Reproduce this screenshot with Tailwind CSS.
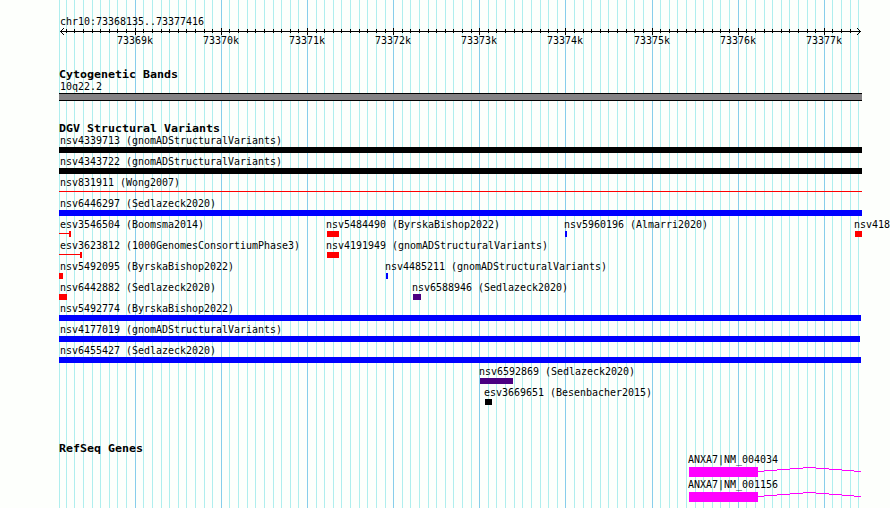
<!DOCTYPE html>
<html lang="en">
<head>
<meta charset="utf-8">
<title>chr10:73368135..73377416</title>
<script src="https://cdn.jsdelivr.net/npm/@tailwindcss/browser@4"></script>
</head>
<body class="bg-[#fdfffc] overflow-hidden">
<main id="browser" class="relative w-[890px] h-[508px] overflow-hidden bg-[#fdfffc] text-black font-['DejaVu_Sans_Mono',monospace] text-[11px] leading-[14px] whitespace-nowrap">
  <svg id="grid" class="absolute inset-0" width="890" height="508" shape-rendering="crispEdges"></svg>
  <div id="tracks" class="relative flex flex-col pt-[15px]"></div>
</main>
<script>
const LABEL = "absolute top-0 origin-left scale-x-[0.906]";
const TITLE = "block h-[12px] ml-[59px] w-max font-bold origin-left scale-x-[1.057]";
const ROW = "relative shrink-0";
const tracks = document.getElementById("tracks");
const grid = document.getElementById("grid");
const label = (x, t) => `<span class="${LABEL}" style="left:${x}px">${t}</span>`;
const rect = (x, y, w, h, c) => `<rect x="${x}" y="${y}" width="${w}" height="${h}" fill="${c}"/>`;
const drawing = (h, body) => `<svg class="absolute left-0 top-0" width="890" height="${h}" shape-rendering="crispEdges">${body}</svg>`;
const row = (items, h = 21) => `<div class="${ROW}" style="height:${h}px">${drawing(h, items.map(i => i[2]).join(""))}${items.map(i => label(i[0], i[1])).join("")}</div>`;

// Grid lines every 100 bp, darker every 1000 bp
let lines = rect(59, 0, 1, 508, "#afeeee"), ticks = rect(60, 16, 801, 1, "#000"), names = "";
for (let i = -8; i <= 84; i++) {
  const x = Math.floor(135.2 + i * 8.614), major = i % 10 === 0;
  lines += rect(x, 0, 1, 508, major ? "#87ceeb" : "#afeeee");
  if (i < 84) ticks += major ? rect(x, 13, 1, 7, "#000") : rect(x, 14, 1, 4, "#000");
  if (major) names += `<span class="${LABEL} mt-[19px]" style="left:${x - 18.5}px">${73369 + i / 10}k</span>`;
}
grid.innerHTML = lines;
// Arrow heads
for (let d = 1; d <= 3; d++) for (const s of [-1, 1])
  ticks += rect(60 + d, 16 + s * d, 1, 1, "#000") + rect(860 - d, 16 + s * d, 1, 1, "#000");

const box = (x, w, c) => rect(x, 13, w, 6, c);
const full = (c, w = 803) => box(59, w, c);
const range = end => rect(59, 15, end - 59, 1, "#f00") + rect(end, 13, 2, 6, "#f00");
const G = " (gnomADStructuralVariants)", S = " (Sedlazeck2020)", B = " (ByrskaBishop2022)";
const BLUE = "#00f", RED = "#f00", PURPLE = "#4b0082";
const gene = t => row([[688, `<span class="block -mt-px">${t}</span>`, rect(689, 13, 69, 10, "#f0f") +
  [[758,6,17],[764,13,16],[777,13,15],[790,13,14],[803,13,13],[816,13,14],[829,13,15],[842,12,16],[854,7,17]]
    .map(([x, w, y]) => rect(x, y, w, 1, "#f0f")).join("")]], 25);

tracks.innerHTML =
  `<div class="relative h-[53px]">${drawing(53, ticks)}${label(60, "chr10:73368135..73377416")}${names}</div>` +
  `<h2 class="${TITLE}">Cytogenetic Bands</h2>` +
  row([[60, "10q22.2", rect(59, 13, 803, 8, "#000") + rect(59, 14, 803, 6, "#848284")]], 42) +
  `<h2 class="${TITLE}">DGV Structural Variants</h2>` +
  row([[60, "nsv4339713" + G, full("#000")]]) +
  row([[60, "nsv4343722" + G, full("#000")]]) +
  row([[60, "nsv831911 (Wong2007)", rect(59, 15, 803, 1, "#f00")]]) +
  row([[60, "nsv6446297" + S, full(BLUE)]]) +
  row([[60, "esv3546504 (Boomsma2014)", range(69)], [326, "nsv5484490" + B, box(327, 12, RED)], [564, "nsv5960196 (Almarri2020)", box(565, 2, BLUE)], [854, "nsv418", box(855, 7, RED)]]) +
  row([[60, "esv3623812 (1000GenomesConsortiumPhase3)", range(80)], [326, "nsv4191949" + G, box(327, 12, RED)]]) +
  row([[60, "nsv5492095" + B, box(59, 4, RED)], [385, "nsv4485211" + G, box(386, 2, BLUE)]]) +
  row([[60, "nsv6442882" + S, box(59, 8, RED)], [412, "nsv6588946" + S, box(413, 8, PURPLE)]]) +
  row([[60, "nsv5492774" + B, full(BLUE, 802)]]) +
  row([[60, "nsv4177019" + G, full(BLUE, 801)]]) +
  row([[60, "nsv6455427" + S, full(BLUE, 802)]]) +
  row([[479, "nsv6592869" + S, box(480, 33, PURPLE)]]) +
  row([[484, "esv3669651 (Besenbacher2015)", box(485, 7, "#000")]], 56) +
  `<h2 class="${TITLE}">RefSeq Genes</h2>` +
  gene("ANXA7|NM_004034") + gene("ANXA7|NM_001156");
</script>
</body>
</html>
